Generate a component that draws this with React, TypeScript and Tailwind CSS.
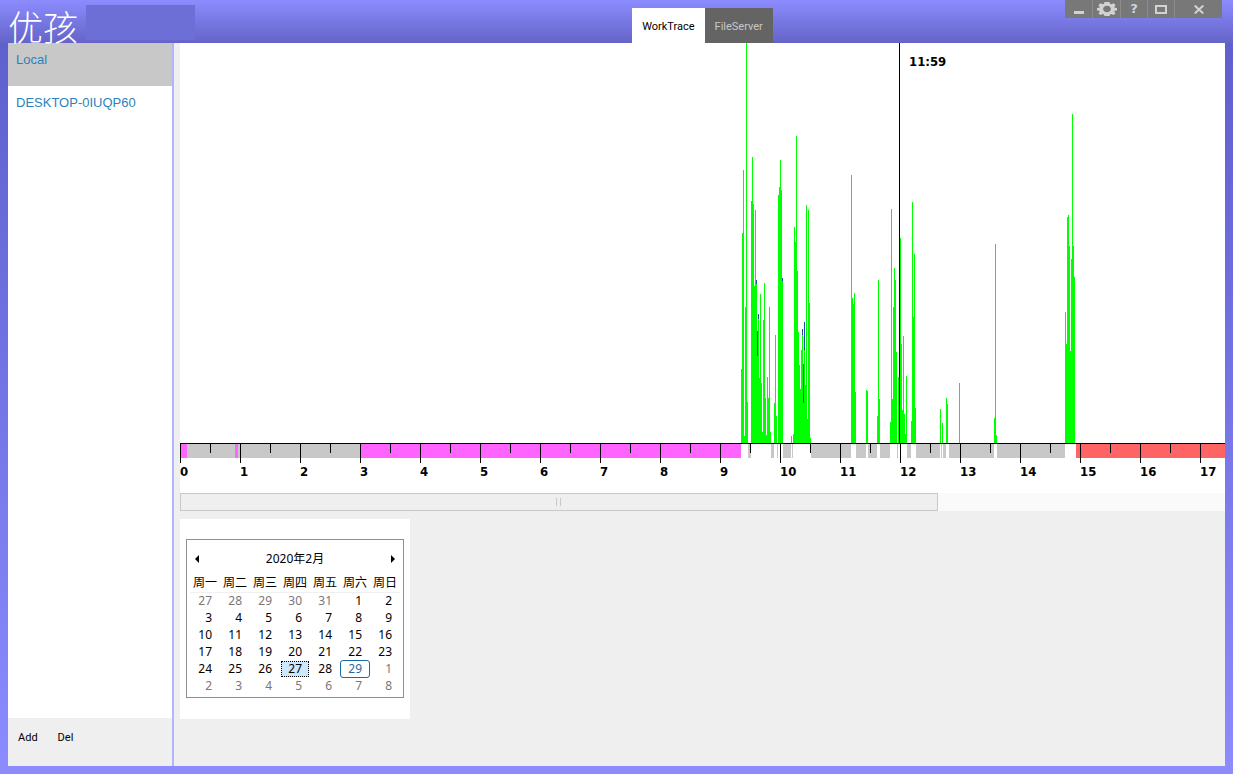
import { useState } from "react";

// [x, top] of each one-pixel column, measured from the chart's corner
const BARS: [number, number][] = [
  [561, 326], [562, 190], [563, 127], [564, 393], [565, 264], [566, 0], [567, 359],
  [571, 158], [572, 114], [573, 161], [574, 243], [575, 167], [576, 241], [577, 313],
  [578, 276], [579, 335], [580, 251], [581, 340], [582, 389], [583, 277], [584, 240],
  [585, 355], [586, 392], [587, 334], [588, 355], [589, 264], [590, 389],
  [594, 360], [595, 292], [596, 373], [598, 152], [599, 144], [600, 117], [601, 147], [602, 238],
  [611, 393], [613, 391], [614, 184], [615, 199], [616, 93], [617, 228], [618, 289],
  [619, 322], [620, 346], [621, 307], [622, 292], [623, 360], [624, 307], [625, 342],
  [626, 162], [627, 376], [628, 167], [629, 260], [630, 395],
  [671, 132], [672, 255], [673, 261], [674, 250], [675, 349], [686, 347], [687, 348],
  [697, 373], [698, 237], [699, 356], [710, 379], [711, 166], [712, 356], [713, 264],
  [714, 225], [715, 237], [716, 309], [718, 334], [720, 195], [721, 301], [722, 367],
  [723, 293], [724, 371], [725, 391], [726, 333], [731, 378], [732, 159], [733, 274],
  [734, 211], [735, 365], [760, 366], [762, 380], [766, 355], [767, 361], [779, 340],
  [814, 375], [815, 201], [816, 392],
  [885, 269], [886, 301], [887, 174], [888, 172], [889, 203], [890, 308], [891, 216],
  [892, 71], [893, 203], [894, 234],
];

// [x, top, height]
const MOUSE_BARS: [number, number, number][] = [
  [576, 237, 4], [577, 288, 25], [578, 271, 5], [602, 235, 3],
  [622, 286, 6], [623, 321, 39], [624, 279, 28],
];

const GRAY = "#c8c8c8";
const PINK = "#ff64ff";
const RED = "#ff6464";

// [x, width, color]
const SEGMENTS: [number, number, string][] = [
  [0, 7, PINK], [7, 48, GRAY], [55, 3, PINK], [58, 123, GRAY], [181, 380, PINK],
  [568, 3, GRAY], [591, 3, GRAY], [597, 1, GRAY], [603, 8, GRAY], [612, 1, GRAY],
  [631, 40, GRAY], [676, 10, GRAY], [688, 9, GRAY], [700, 10, GRAY], [717, 1, GRAY],
  [727, 4, GRAY], [736, 24, GRAY], [761, 1, GRAY], [763, 3, GRAY], [769, 45, GRAY],
  [817, 68, GRAY], [896, 544, RED],
];

const HOURS = Array.from({ length: 18 }, (_, i) => i);
const BASE = 400;
const CURSOR_X = 719;

const WEEKDAYS = ["周一", "周二", "周三", "周四", "周五", "周六", "周日"];
const WEEKS = [
  [27, 28, 29, 30, 31, 1, 2],
  [3, 4, 5, 6, 7, 8, 9],
  [10, 11, 12, 13, 14, 15, 16],
  [17, 18, 19, 20, 21, 22, 23],
  [24, 25, 26, 27, 28, 29, 1],
  [2, 3, 4, 5, 6, 7, 8],
];
const TODAY = 29;

function WindowControls() {
  return (
    <div className="absolute top-0 right-[11px] flex h-[18px] divide-x divide-[#8c8c8c] bg-[#787878] text-[#d2d2d2]">
      <button type="button" aria-label="Minimize" className="flex w-7 items-center justify-center">
        <svg width="12" height="12" shapeRendering="crispEdges">
          <path d="M1 8h10v3H1z" fill="currentColor" />
        </svg>
      </button>
      <button type="button" aria-label="Settings" className="flex w-7 items-center justify-center">
        <svg width="20" height="14" viewBox="0 0 20 14">
          <path
            fill="currentColor"
            fillRule="evenodd"
            d="M7.500 0h5l.5 1.700 1.400.5L16.600 1.200l2 2-1.300 1.600.4.900 2.300.3v2.400l-2.300.4-.4.900 1.300 1.500-2 1.900-2.200-1-1.400.5L12.500 14h-5L7 12.600l-1.400-.5-2.200 1-2-1.900 1.300-1.500-.4-.9L0 8.400V6l2.300-.3.4-.9L1.400 3.200l2-2 2.200 1L7 1.700zM10 3.800c-2.200 0-3.900 1.400-3.900 3.200S7.800 10.200 10 10.200s3.900-1.400 3.900-3.200S12.200 3.800 10 3.800z"
          />
        </svg>
      </button>
      <button
        type="button"
        className="w-[27px] text-center font-['DejaVu_Sans',sans-serif] text-[13px] leading-[18px] font-bold"
      >
        ?
      </button>
      <button type="button" aria-label="Maximize" className="flex w-[27px] items-center justify-center">
        <svg width="12" height="9" shapeRendering="crispEdges">
          <path fill="currentColor" fillRule="evenodd" d="M0 0h12v9H0zM2 2v5h8V2z" />
        </svg>
      </button>
      <button type="button" aria-label="Close" className="flex w-[47px] items-center justify-center">
        <svg width="10" height="9" viewBox="0 0 10 9" fill="none" stroke="currentColor" strokeWidth="2">
          <path d="M.7.500l8.600 8M9.300.500l-8.600 8" />
        </svg>
      </button>
    </div>
  );
}

function ActivityChart() {
  return (
    <svg
      className="block h-[450px] w-full bg-white font-['DejaVu_Sans_Condensed','DejaVu_Sans',sans-serif] text-[13px] font-bold"
      shapeRendering="crispEdges"
    >
      {BARS.map(([x, top]) => (
        <rect key={x} x={x} y={top} width={1} height={BASE - top} fill="#00ff00" />
      ))}
      {MOUSE_BARS.map(([x, top, h]) => (
        <rect key={x} x={x} y={top} width={1} height={h} fill="#1e50a0" />
      ))}
      {SEGMENTS.map(([x, w, color]) => (
        <rect key={x} x={x} y={BASE + 1} width={w} height={14} fill={color} />
      ))}

      {/* Axis */}
      <rect x={0} y={BASE} width="100%" height={1} />
      {HOURS.map((h) => (
        <g key={h}>
          <rect x={h * 60} y={BASE} width={1} height={20} />
          <rect x={h * 60 + 30} y={BASE} width={1} height={10} />
          <text x={h * 60} y={433}>
            {h}
          </text>
        </g>
      ))}

      {/* Cursor */}
      <rect x={CURSOR_X} y={0} width={1} height={BASE} />
      <text x={CURSOR_X + 10} y={23}>
        11:59
      </text>
    </svg>
  );
}

function Calendar() {
  const [selected, setSelected] = useState(27);

  function dayClass(outside: boolean, day: number) {
    if (outside) return "text-[#787878]";
    if (day === selected) return "bg-[#cce8ff] outline-1 -outline-offset-1 outline-dotted outline-black";
    if (day === TODAY) return "rounded-xs text-[#2a6aa5] outline-1 outline-[#1a6ba8]";
    return "";
  }

  return (
    <div className="w-[218px] border border-[#8e8f8f] bg-white p-[3px] font-['Noto_Sans','Noto_Sans_CJK_SC',sans-serif] text-[12px] text-black">
      <div className="flex h-[31px] items-center justify-between px-1">
        <button type="button" aria-label="Previous month" className="p-px">
          <svg width="4" height="8">
            <path d="M4 0v8L0 4z" />
          </svg>
        </button>
        <span>2020年2月</span>
        <button type="button" aria-label="Next month" className="p-px">
          <svg width="4" height="8">
            <path d="M0 0v8l4-4z" />
          </svg>
        </button>
      </div>
      <table className="w-full table-fixed border-collapse">
        <thead>
          <tr className="h-[18px] border-b border-[#f0f0f0]">
            {WEEKDAYS.map((d) => (
              <th key={d} className="p-0 text-center leading-[17px] font-normal">
                {d}
              </th>
            ))}
          </tr>
        </thead>
        <tbody>
          {WEEKS.map((week, w) => (
            <tr key={w}>
              {week.map((day, d) => {
                const outside = (w === 0 && day > 20) || (w > 3 && day < 20);
                return (
                  <td key={d} className="h-[17px] p-0">
                    <button
                      type="button"
                      onClick={() => !outside && setSelected(day)}
                      className={`mx-auto block h-4 w-7 pr-[7px] text-right leading-4 ${dayClass(outside, day)}`}
                    >
                      {day}
                    </button>
                  </td>
                );
              })}
            </tr>
          ))}
        </tbody>
      </table>
    </div>
  );
}

export default function App() {
  const [tab, setTab] = useState("WorkTrace");
  const [host, setHost] = useState("Local");

  return (
    <div className="flex min-h-screen flex-col bg-[#8c8cff]">
      <header className="relative flex h-[43px] shrink-0 bg-linear-to-b from-[#8c8cff] to-[#6464c8] px-2">
        <div className="flex w-[172px] shrink-0">
          <h1 className="shrink-0 pt-2 font-['Noto_Sans_CJK_SC',sans-serif] text-[35px] leading-[35px] font-light text-white">
            优孩
          </h1>
          <div className="mt-[5px] ml-2 h-[35px] w-[109px] shrink-0 bg-[#6e6ed7]" />
        </div>
        <nav className="flex flex-1 justify-center pt-2 font-[Roboto,sans-serif] text-[11px]">
          {["WorkTrace", "FileServer"].map((name) => (
            <button
              key={name}
              type="button"
              onClick={() => setTab(name)}
              className={`px-2.5 pt-[3px] ${tab === name ? "bg-white text-black" : "bg-[#646464] text-[#c8c8c8]"}`}
            >
              {name}
            </button>
          ))}
        </nav>
        <WindowControls />
      </header>

      <div className="flex flex-1 bg-linear-to-b from-[#5f5fcd] to-[#8c8cff] px-2 pb-2">
        <aside className="flex w-[164px] shrink-0 flex-col bg-white">
          <ul className="flex-1 font-['Liberation_Sans',Arial,sans-serif] text-[13px] text-[#2d82be]">
            {["Local", "DESKTOP-0IUQP60"].map((name) => (
              <li key={name}>
                <button
                  type="button"
                  onClick={() => setHost(name)}
                  className={`block h-[43px] w-full px-2 pb-2.5 text-left ${host === name ? "bg-[#c8c8c8]" : ""}`}
                >
                  {name}
                </button>
              </li>
            ))}
          </ul>
          <div className="flex h-12 items-start bg-[#efefef] font-[Roboto,sans-serif] text-[11px] text-black">
            <button type="button" className="h-10 px-2.5">
              Add
            </button>
            <button type="button" className="h-10 px-2.5">
              Del
            </button>
          </div>
        </aside>

        <main className="min-w-0 flex-1 border-l-2 border-[#b4b4ff] bg-[#efefef] pl-1.5">
          <ActivityChart />
          <div className="h-[18px] bg-[#fafafa]">
            <div className="flex h-full w-[72.5%] items-center justify-center gap-[3px] border border-[#c8c8c8] bg-[#efefef]">
              <span className="h-2 w-px bg-[#c8c8c8]" />
              <span className="h-2 w-px bg-[#c8c8c8]" />
            </div>
          </div>
          <div className="mt-2 flex h-[200px] w-[230px] items-start justify-center bg-white pt-5">
            <Calendar />
          </div>
        </main>
      </div>
    </div>
  );
}
